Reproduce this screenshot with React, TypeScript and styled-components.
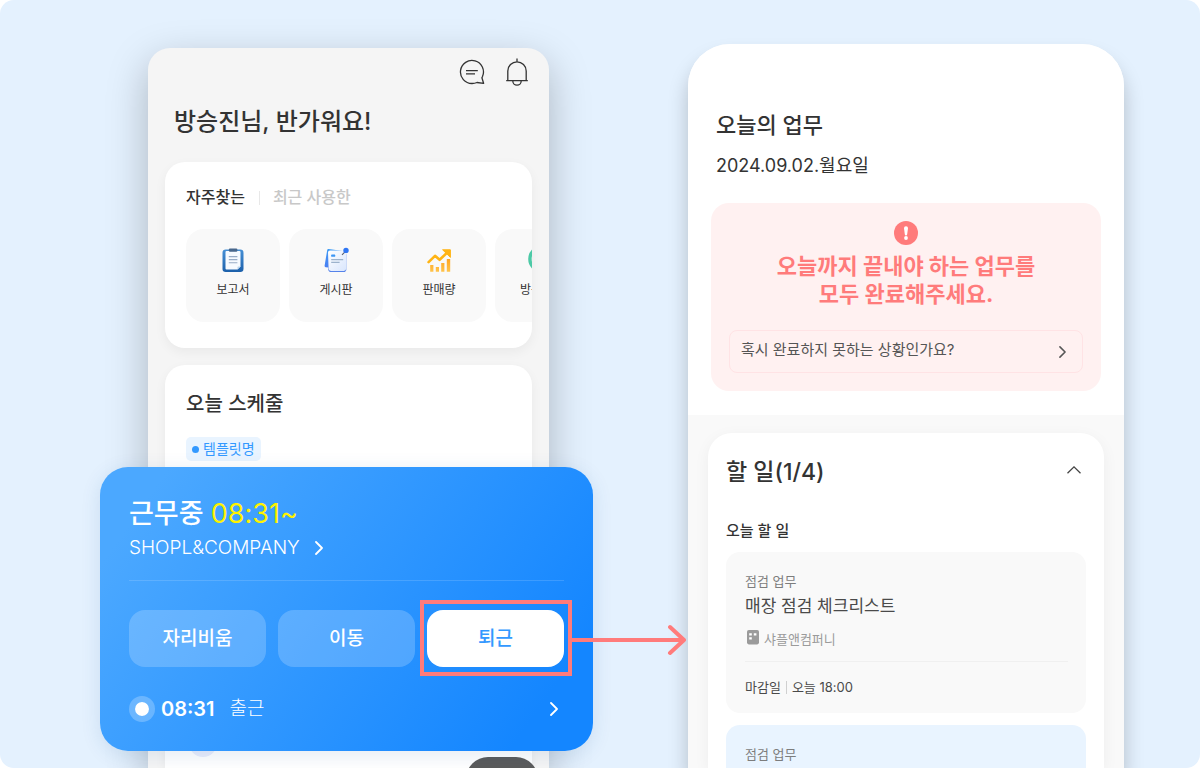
import React from 'react';
import styled, { createGlobalStyle } from 'styled-components';

const GlobalStyle = createGlobalStyle`
  *, *::before, *::after { box-sizing: border-box; }
  body {
    margin: 0;
    background: #fff;
    color: #333;
    font-family: Inter, "Noto Sans CJK KR", sans-serif;
  }
  h1, h2, h3, p { margin: 0; }
  button {
    padding: 0;
    border: 0;
    background: none;
    color: inherit;
    font: inherit;
    cursor: pointer;
  }
  svg { display: block; flex: none; }
`;

const Stage = styled.main`
  display: grid;
  grid-template-columns: 401fr 436fr;
  grid-template-rows: minmax(0, 1fr);
  column-gap: 139px;
  height: 100vh;
  padding: 44px 76px 0 148px;
  overflow: hidden;
  border-radius: 14px;
  background: #e4f1fe;
`;

/* Home screen */

const HomeScreen = styled.section`
  position: relative;
  display: flex;
  flex-direction: column;
  min-width: 0;
  margin-top: 4px;
  padding: 10px 17px 0;
  border-radius: 22px 22px 0 0;
  background: #f5f5f5;
  box-shadow: 0 14px 40px rgba(0, 0, 0, 0.25);
`;

const IconBar = styled.div`
  display: flex;
  justify-content: flex-end;
  align-items: center;
  gap: 20px;
  height: 28px;
  padding-right: 3px;
`;

const Greeting = styled.h1`
  margin-top: 18px;
  padding-left: 9px;
  font-size: 24px;
  font-weight: 500;
  line-height: 36px;
`;

const HomeCard = styled.section<{ $fill?: boolean }>`
  flex: ${(p) => (p.$fill ? '1' : 'none')};
  min-height: 0;
  margin-top: ${(p) => (p.$fill ? 17 : 22)}px;
  padding: 22px 0 ${(p) => (p.$fill ? 0 : 26)}px 21px;
  overflow: hidden;
  border-radius: ${(p) => (p.$fill ? '20px 20px 0 0' : '20px')};
  background: #fff;
  box-shadow: 0 4px 12px rgba(0, 0, 0, 0.05);
`;

const Tabs = styled.div`
  display: flex;
  align-items: center;
`;

const Tab = styled.button<{ $active?: boolean }>`
  color: ${(p) => (p.$active ? '#333' : '#c8c8c8')};
  font-size: 16px;
  font-weight: 500;
  line-height: 26px;
`;

const TabDivider = styled.span`
  width: 1px;
  height: 14px;
  margin: 2px 13px 0 14px;
  background: #e8e8e8;
`;

const Tiles = styled.div`
  display: flex;
  gap: 9px;
  margin-top: 19px;
`;

const Tile = styled.button`
  display: flex;
  flex: none;
  flex-direction: column;
  align-items: center;
  width: 94px;
  height: 93px;
  padding-top: 18px;
  border-radius: 18px;
  background: #f9f9f9;
  font-size: 12px;
  line-height: 18px;
  gap: 8px;
`;

const ScheduleTitle = styled.h2`
  font-size: 20px;
  font-weight: 500;
  line-height: 34px;
`;

const Tag = styled.span`
  display: flex;
  align-items: center;
  gap: 4px;
  width: fit-content;
  height: 24px;
  margin-top: 16px;
  padding: 0 6px;
  border-radius: 5px;
  background: #e9f4ff;
  color: #3399ff;
  font-size: 14px;
  line-height: 24px;
`;

const Dot = styled.i`
  width: 7px;
  height: 7px;
  border-radius: 50%;
  background: #3399ff;
`;

const Avatar = styled.div`
  width: 28px;
  height: 28px;
  margin: 268px 0 0 3px;
  border-radius: 50%;
  background: #e9edfc;
`;

const FloatingButton = styled.button`
  position: absolute;
  right: 11px;
  bottom: -33px;
  width: 72px;
  height: 44px;
  border-radius: 22px;
  background: #5b5b5b;
`;

/* Working status card, laid over the home screen */

const WorkCard = styled.section`
  position: absolute;
  top: 419px;
  left: -48px;
  right: -44px;
  z-index: 1;
  padding: 29px 29px 26px;
  border-radius: 28px;
  background: linear-gradient(125deg, #4ba8ff 10%, #1486ff 88%);
  box-shadow: 0 4px 20px rgba(20, 80, 150, 0.12);
  color: #fff;
`;

const WorkTitle = styled.h2`
  font-size: 27px;
  font-weight: 500;
  line-height: 36px;
`;

const WorkTime = styled.span`
  color: #fff200;
  font-weight: 400;
`;

const Company = styled.button`
  display: flex;
  align-items: center;
  gap: 15px;
  font-size: 19px;
  font-weight: 300;
  line-height: 32px;
`;

const WorkActions = styled.div`
  display: grid;
  grid-template-columns: repeat(3, 1fr);
  gap: 12px;
  margin-top: 16px;
  padding-top: 29px;
  border-top: 1px solid rgba(255, 255, 255, 0.14);
`;

const ActionCell = styled.div`
  position: relative;
`;

const Action = styled.button<{ $primary?: boolean }>`
  width: 100%;
  height: 57px;
  padding-bottom: 4px;
  border-radius: 16px;
  background: ${(p) => (p.$primary ? '#fff' : 'rgba(255, 255, 255, 0.2)')};
  color: ${(p) => (p.$primary ? '#3399ff' : '#fff')};
  font-size: 19px;
  font-weight: 500;
`;

const Highlight = styled.div`
  position: absolute;
  inset: -10px -8px -9px -7px;
  border: 4px solid #ff7b7b;
  pointer-events: none;
`;

const Arrow = styled.svg`
  position: absolute;
  top: 14px;
  left: calc(100% + 7px);
`;

const LogRow = styled.button`
  display: flex;
  align-items: center;
  width: 100%;
  margin-top: 26px;
  padding-right: 6px;
  font-size: 19px;
  line-height: 32px;
`;

const Pulse = styled.i`
  width: 26px;
  height: 26px;
  border: 6px solid rgba(255, 255, 255, 0.24);
  border-radius: 50%;
  background: #fff;
  background-clip: padding-box;
`;

const LogTime = styled.span`
  margin: 0 15px 0 6px;
  font-size: 20px;
  font-weight: 600;
`;

const LogLabel = styled.span`
  flex: 1;
  font-weight: 300;
  text-align: left;
`;

/* Task screen */

const TaskScreen = styled.section`
  display: flex;
  flex-direction: column;
  min-width: 0;
  min-height: 0;
  overflow: hidden;
  border-radius: 42px 42px 0 0;
  background: #f9f9f9;
`;

const TaskScreenShadow = styled.div`
  display: grid;
  grid-template-rows: minmax(0, 1fr);
  min-width: 0;
  border-radius: 42px 42px 0 0;
  box-shadow: 0 14px 20px rgba(0, 0, 0, 0.22);
`;

const TodayPanel = styled.header`
  flex: none;
  padding: 64px 23px 24px;
  background: #fff;
`;

const TodayTitle = styled.h1`
  padding-left: 5px;
  font-size: 22px;
  font-weight: 500;
  line-height: 34px;
`;

const TodayDate = styled.p`
  margin-top: 10px;
  padding-left: 5px;
  font-size: 18px;
  line-height: 28px;
`;

const Alert = styled.div`
  display: flex;
  flex-direction: column;
  align-items: center;
  margin-top: 23px;
  padding: 18px;
  border-radius: 18px;
  background: #fff1f1;
`;

const AlertText = styled.h2`
  margin-top: 7px;
  color: #ff7b7b;
  font-size: 22px;
  font-weight: 700;
  line-height: 28px;
  text-align: center;
`;

const AlertLink = styled.button`
  display: flex;
  justify-content: space-between;
  align-items: center;
  width: 100%;
  height: 43px;
  margin-top: 22px;
  padding: 0 16px 0 11px;
  border: 1px solid #ffe3e5;
  border-radius: 8px;
  color: #555;
  font-size: 15px;
`;

const AlertLinkLabel = styled.span`
  padding-bottom: 6px;
`;

const TodoCard = styled.section`
  flex: 1;
  min-height: 0;
  margin: 18px 20px 0;
  padding: 20px 18px 0;
  border-radius: 24px 24px 0 0;
  background: #fff;
  box-shadow: 0 4px 16px rgba(0, 0, 0, 0.05);
`;

const TodoHeader = styled.div`
  display: flex;
  justify-content: space-between;
  align-items: center;
  padding-right: 5px;
`;

const TodoTitle = styled.h2`
  font-size: 23px;
  font-weight: 500;
  line-height: 38px;
`;

const TodoToggle = styled.button`
  padding-bottom: 4px;
`;

const TodoSubtitle = styled.h3`
  margin-top: 28px;
  font-size: 15px;
  font-weight: 500;
  line-height: 24px;
`;

const Task = styled.article<{ $blue?: boolean }>`
  height: 161px;
  margin-top: ${(p) => (p.$blue ? 12 : 9)}px;
  padding: 19px 18px 0 19px;
  border-radius: 14px;
  background: ${(p) => (p.$blue ? '#e9f4ff' : '#f9f9f9')};
`;

const TaskKind = styled.p`
  color: #7d7d7d;
  font-size: 13px;
  line-height: 20px;
`;

const TaskName = styled.p`
  color: #4a4a4a;
  font-size: 17px;
  line-height: 30px;
`;

const TaskPlace = styled.p`
  display: flex;
  align-items: center;
  gap: 5px;
  margin-top: 8px;
  padding: 0 0 12px 2px;
  border-bottom: 1px solid #f0f0f0;
  color: #9b9b9b;
  font-size: 13px;
  line-height: 20px;
`;

const TaskDue = styled.p`
  display: flex;
  align-items: center;
  margin-top: 15px;
  color: #4a4a4a;
  font-size: 13px;
  line-height: 20px;
`;

const DueDivider = styled.i`
  width: 1px;
  height: 13px;
  margin: 0 5px;
  background: #d0d0d0;
`;

const ChatIcon = () => (
  <svg width="26" height="26" viewBox="0 0 26 26" fill="none" stroke="#333" strokeWidth="1.3" strokeLinejoin="round">
    <path d="M13 24.5A11.5 11.5 0 1 1 23.5 17.6L22.9 18.8L24.6 24.3L18 23.5Q15.6 24.5 13 24.5Z" />
    <path d="M7 11.6H18.8M7 14.9H16" />
  </svg>
);

const BellIcon = () => (
  <svg width="24" height="28" viewBox="0 0 24 28" fill="none" stroke="#333" strokeWidth="1.3">
    <path d="M2.8 22.7V13A9.2 9.2 0 0 1 21.2 13V22.7M1.2 22.7H22.8M7.8 23A4.2 4.2 0 0 0 16.2 23M12 .4V3.8" />
  </svg>
);

const ReportIcon = () => (
  <svg width="26" height="26" viewBox="0 0 26 26">
    <defs>
      <linearGradient id="reportBoard" x1="0" y1="0" x2="0" y2="1">
        <stop offset="0" stopColor="#4690d6" />
        <stop offset="1" stopColor="#1c60aa" />
      </linearGradient>
    </defs>
    <rect x="2.5" y="2.5" width="21" height="22.5" rx="3.2" fill="url(#reportBoard)" />
    <path d="M5.5 5a1 1 0 0 1 1-1h13a1 1 0 0 1 1 1v14.5l-3 3h-11a1 1 0 0 1-1-1z" fill="#f6faff" />
    <path d="M20.5 19.5l-3 3v-2a1 1 0 0 1 1-1z" fill="#bcd5ee" />
    <rect x="8.8" y="1.6" width="8.6" height="3.2" rx="1.2" fill="#48678c" />
    <path d="M8.8 9.6h8.6M8.8 12.6h8.6M8.8 15.8h8.6" stroke="#98acc6" strokeWidth="1.1" />
  </svg>
);

const BoardIcon = () => (
  <svg width="26" height="26" viewBox="0 0 26 26">
    <defs>
      <linearGradient id="boardBack" x1="0" y1="0" x2="0" y2="1">
        <stop offset="0" stopColor="#3f9cf5" />
        <stop offset="1" stopColor="#4a7df2" />
      </linearGradient>
      <linearGradient id="boardSheet" x1="0" y1="0" x2="1" y2="1">
        <stop offset="0" stopColor="#fff" />
        <stop offset="1" stopColor="#d9e6fd" />
      </linearGradient>
    </defs>
    <path d="M4.2 3q.2-1.2 1.4-1L20 4 17 21.5 2.6 20.2Q1.4 20 1.6 18.8z" fill="url(#boardBack)" />
    <rect x="5.3" y="5" width="18" height="20" rx="2.8" fill="#5683ea" />
    <path d="M5 5.6Q5 3.6 7 3.6H20.6q2.6 0 2.6 2.4V21.6q0 2.4-2.4 2.4H8q-2.4 0-2.4-2.4z" fill="url(#boardSheet)" />
    <rect x="8.2" y="7.6" width="4" height="2.2" rx=".6" fill="#3b96f5" />
    <path d="M8.2 12.6h12M8.2 15.4h8.4" stroke="#9cb2cc" strokeWidth="1.2" />
    <path d="M19 7.8l3-3" stroke="#555f70" strokeWidth="1.1" />
    <circle cx="23" cy="3.4" r="2.7" fill="#2f76f4" />
  </svg>
);

const SalesIcon = () => (
  <svg width="26" height="26" viewBox="0 0 26 26">
    <defs>
      <linearGradient id="salesBar" x1="0" y1="0" x2="0" y2="1">
        <stop offset="0" stopColor="#ffa51f" />
        <stop offset="1" stopColor="#ffc44c" />
      </linearGradient>
    </defs>
    <path d="M2.6 15.2L9 8.8l4.6 4L20.8 6" fill="none" stroke="#ffb414" strokeWidth="2.6" strokeLinejoin="round" strokeLinecap="round" />
    <path d="M16.6 2.8H24.4V10.4z" fill="#ffb414" stroke="#ffb414" strokeLinejoin="round" />
    <path d="M4.2 18h3.2v6.8H4.2zM9.8 20h3.2v4.8H9.8zM15.2 16h3.2v8.8h-3.2zM20.8 12h3.4v12.8h-3.4z" fill="url(#salesBar)" />
  </svg>
);

const VisitIcon = () => (
  <svg width="28" height="26" viewBox="0 0 28 26">
    <circle cx="14" cy="12" r="11.8" fill="none" stroke="#4cc9a6" strokeWidth="4" />
    <circle cx="14" cy="12" r="10.4" fill="#e6faf4" />
  </svg>
);

const Chevron = ({ color, width, height, stroke }: { color: string; width: number; height: number; stroke: number }) => (
  <svg width={width} height={height} viewBox="0 0 8 14" fill="none" stroke={color} strokeWidth={stroke}>
    <path d="M1 1l6 6-6 6" strokeLinecap="round" strokeLinejoin="round" />
  </svg>
);

const ChevronUp = () => (
  <svg width="14" height="8" viewBox="0 0 14 8" fill="none" stroke="#444" strokeWidth="1.3">
    <path d="M.5 7.2L7 .9l6.5 6.3" />
  </svg>
);

const AlertIcon = () => (
  <svg width="24" height="24" viewBox="0 0 24 24">
    <circle cx="12" cy="12" r="12" fill="#ff7b7b" />
    <path d="M12 5.2a2 2 0 0 1 2 2.1l-.8 6a1.2 1.2 0 0 1-2.4 0l-.8-6a2 2 0 0 1 2-2.1z" fill="#fff" />
    <circle cx="12" cy="17" r="1.9" fill="#fff" />
  </svg>
);

const BuildingIcon = () => (
  <svg width="12" height="18" viewBox="0 0 12 18">
    <rect width="12" height="14.4" rx="1.8" fill="#9b9b9b" />
    <path d="M2.2 3.2h2.6v2.400H2.2zM6.8 3.2h2.6v2.4H6.8zM2.2 7.2h2.6v2.2H2.2z" fill="#fff" />
  </svg>
);

const shortcuts = [
  { label: '보고서', icon: <ReportIcon /> },
  { label: '게시판', icon: <BoardIcon /> },
  { label: '판매량', icon: <SalesIcon /> },
  { label: '방문일지', icon: <VisitIcon /> },
];

export default function App() {
  return (
    <>
      <GlobalStyle />
      <Stage>
        <HomeScreen>
          <IconBar>
            <button aria-label="메시지"><ChatIcon /></button>
            <button aria-label="알림"><BellIcon /></button>
          </IconBar>
          <Greeting>방승진님, 반가워요!</Greeting>

          <HomeCard>
            <Tabs>
              <Tab $active>자주찾는</Tab>
              <TabDivider />
              <Tab>최근 사용한</Tab>
            </Tabs>
            <Tiles>
              {shortcuts.map((s) => (
                <Tile key={s.label}>
                  {s.icon}
                  {s.label}
                </Tile>
              ))}
            </Tiles>
          </HomeCard>

          <HomeCard $fill>
            <ScheduleTitle>오늘 스케줄</ScheduleTitle>
            <Tag><Dot />템플릿명</Tag>
            <Avatar />
          </HomeCard>

          <FloatingButton aria-label="메뉴" />

          <WorkCard>
            <WorkTitle>근무중 <WorkTime>08:31~</WorkTime></WorkTitle>
            <Company>
              SHOPL&amp;COMPANY
              <Chevron color="#fff" width={8} height={14} stroke={1.8} />
            </Company>
            <WorkActions>
              <ActionCell><Action>자리비움</Action></ActionCell>
              <ActionCell><Action>이동</Action></ActionCell>
              <ActionCell>
                <Action $primary>퇴근</Action>
                <Highlight />
                <Arrow width="116" height="32" viewBox="0 0 116 32" fill="none" stroke="#ff7b7b" strokeWidth="4">
                  <path d="M0 16H113M99 3L113 16L99 29" strokeLinejoin="round" strokeLinecap="round" />
                </Arrow>
              </ActionCell>
            </WorkActions>
            <LogRow>
              <Pulse />
              <LogTime>08:31</LogTime>
              <LogLabel>출근</LogLabel>
              <Chevron color="#fff" width={8} height={14} stroke={1.8} />
            </LogRow>
          </WorkCard>
        </HomeScreen>

        <TaskScreenShadow>
          <TaskScreen>
            <TodayPanel>
              <TodayTitle>오늘의 업무</TodayTitle>
              <TodayDate>2024.09.02.월요일</TodayDate>
              <Alert>
                <AlertIcon />
                <AlertText>오늘까지 끝내야 하는 업무를<br />모두 완료해주세요.</AlertText>
                <AlertLink>
                  <AlertLinkLabel>혹시 완료하지 못하는 상황인가요?</AlertLinkLabel>
                  <Chevron color="#555" width={7} height={12} stroke={1.8} />
                </AlertLink>
              </Alert>
            </TodayPanel>

            <TodoCard>
              <TodoHeader>
                <TodoTitle>할 일(1/4)</TodoTitle>
                <TodoToggle aria-label="접기"><ChevronUp /></TodoToggle>
              </TodoHeader>
              <TodoSubtitle>오늘 할 일</TodoSubtitle>
              <Task>
                <TaskKind>점검 업무</TaskKind>
                <TaskName>매장 점검 체크리스트</TaskName>
                <TaskPlace><BuildingIcon />샤플앤컴퍼니</TaskPlace>
                <TaskDue>마감일<DueDivider />오늘 18:00</TaskDue>
              </Task>
              <Task $blue>
                <TaskKind>점검 업무</TaskKind>
              </Task>
            </TodoCard>
          </TaskScreen>
        </TaskScreenShadow>
      </Stage>
    </>
  );
}
